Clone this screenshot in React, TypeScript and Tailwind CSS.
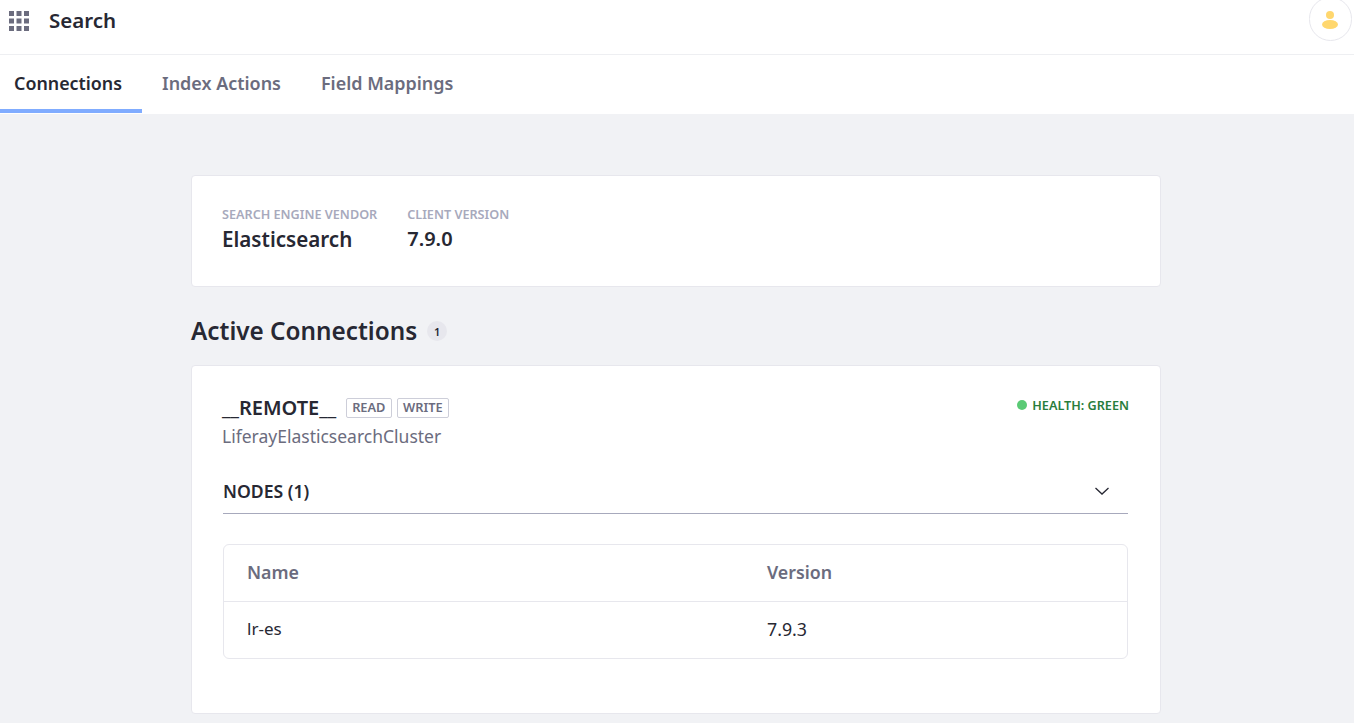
const UserIcon = () => (
  <svg width="16" height="18" viewBox="0 0 16 18" fill="#ffd76e" className="mt-[2px] -ml-[1px]">
    <circle cx="8" cy="4" r="4" />
    <ellipse cx="8" cy="13.5" rx="8" ry="4.5" />
  </svg>
);

const GridIcon = () => (
  <svg width="20" height="20" viewBox="0 0 20 20" fill="#6b6c7e">
    {[0, 7.5, 15].map((y) =>
      [0, 7.5, 15].map((x) => <rect key={`${x}-${y}`} x={x} y={y} width="5" height="5" />)
    )}
  </svg>
);

const Tag = ({ label }: { label: string }) => (
  <span className="h-[20px] pl-[5px] pr-[5.5px] pb-[1px] flex items-center border border-[#cdced9] rounded-[2px] text-[12.8px] font-semibold text-[#6b6c7e] leading-none">
    {label}
  </span>
);

export default function App() {
  return (
    <div className="h-[723px] overflow-hidden bg-[#f1f2f5] text-[#272833] font-['Noto_Sans',sans-serif]">
      {/* Top bar */}
      <div className="bg-white h-[55px] border-b border-[#eeeff2] flex items-start justify-between">
        <div className="flex items-center pl-[9px] pt-[11px]">
          <GridIcon />
          <span className="ml-[20px] -mt-[3px] text-[20.5px] font-semibold leading-[20px]">Search</span>
        </div>
        <div className="mr-[2px] -mt-[3px] w-[43px] h-[44px] rounded-full border border-[#e7e7ed] flex items-center justify-center">
          <UserIcon />
        </div>
      </div>

      {/* Tabs */}
      <div className="bg-white h-[59px] flex items-start">
        <div className="w-[142px] h-[58px] pl-[14px] pt-[16px] border-b-4 border-[#80acff] text-[17.85px] font-semibold leading-[24px]">
          Connections
        </div>
        <div className="ml-[20px] pt-[16px] text-[17.95px] font-semibold leading-[24px] text-[#6b6c7e]">
          Index Actions
        </div>
        <div className="ml-[40px] pt-[16px] text-[17.95px] font-semibold leading-[24px] text-[#6b6c7e]">
          Field Mappings
        </div>
      </div>

      <div className="w-[970px] ml-[191px] pt-[61px]">
        {/* Vendor card */}
        <div className="bg-white h-[112px] border border-[#e7e7ed] rounded-[4px] pl-[30px] pt-[30px] flex gap-[30px]">
          <div>
            <div className="text-[12.65px] font-semibold leading-[16px] text-[#a7a9bc]">SEARCH ENGINE VENDOR</div>
            <div className="mt-[1px] text-[20.6px] font-semibold leading-[32px]">Elasticsearch</div>
          </div>
          <div>
            <div className="text-[12.65px] font-semibold leading-[16px] text-[#a7a9bc]">CLIENT VERSION</div>
            <div className="mt-[1px] text-[20px] font-semibold leading-[32px]">7.9.0</div>
          </div>
        </div>

        <div className="mt-[27px] h-[34px] flex items-center">
          <h2 className="text-[24.3px] font-semibold leading-[34px]">Active Connections</h2>
          <span className="ml-[10px] w-[20px] h-[20px] rounded-full bg-[#e7e7ed] flex items-center justify-center text-[11px] font-semibold leading-none">
            1
          </span>
        </div>

        {/* Connection card */}
        <div className="mt-[17px] bg-white h-[349px] border border-[#e7e7ed] rounded-[4px] pl-[30px] pr-[32px] pt-[29px]">
          <div className="flex justify-between">
            <div>
              <div className="flex items-center h-[26px] gap-[5px]">
                <span className="text-[20px] font-semibold leading-[26px] mr-[5px]">__REMOTE__</span>
                <Tag label="READ" />
                <Tag label="WRITE" />
              </div>
              <div className="text-[17.5px] leading-[26px] text-[#6b6c7e] mt-[2px]">LiferayElasticsearchCluster</div>
            </div>
            <div className="flex items-center h-[20px] gap-[5px] -mr-[1px]">
              <span className="w-[10px] h-[10px] rounded-full bg-[#5aca75]" />
              <span className="text-[12.65px] font-semibold text-[#287d3c] leading-none">HEALTH: GREEN</span>
            </div>
          </div>

          <div className="mt-[23px] ml-[1px] h-[42px] border-b border-[#a7a9bc] flex items-center justify-between pr-[18px]">
            <span className="text-[17.6px] font-semibold leading-[24px] pb-[3px]">NODES (1)</span>
            <svg width="16" height="10" viewBox="0 0 16 10" fill="none" stroke="#272833" strokeWidth="1.3" className="mb-[3px]">
              <path d="M1.5 2 L8 8 L14.5 2" />
            </svg>
          </div>

          {/* Nodes table */}
          <div className="mt-[30px] ml-[1px] border border-[#e7e7ed] rounded-[6px] text-[17.8px]">
            <div className="h-[57px] border-b border-[#e7e7ed] flex items-center pl-[23px] pb-[2px] font-semibold text-[#6b6c7e]">
              <span className="w-[520px]">Name</span>
              <span>Version</span>
            </div>
            <div className="h-[56px] flex items-center pl-[23px] pb-[2px]">
              <span className="w-[520px] text-[17px]">lr-es</span>
              <span>7.9.3</span>
            </div>
          </div>
        </div>
      </div>
    </div>
  );
}
